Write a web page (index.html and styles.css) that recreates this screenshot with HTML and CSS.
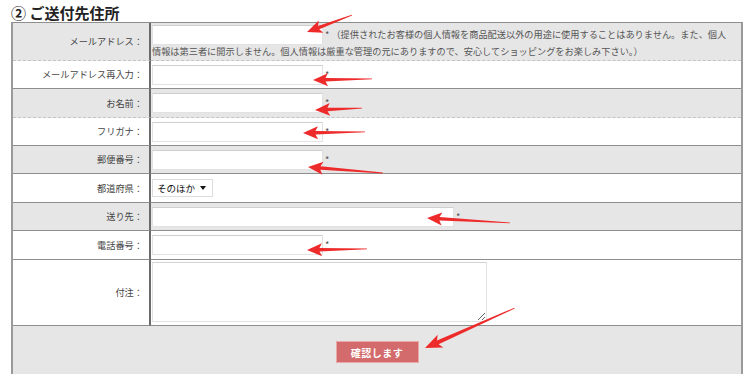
FILE: index.html
```html
<!DOCTYPE html>
<html lang="ja">
<head>
<meta charset="utf-8">
<title>ご送付先住所</title>
<link rel="stylesheet" href="styles.css">
</head>
<body>
<div class="page">
  <h2 class="title">② ご送付先住所</h2>
  <table class="form">
    <tr class="gray dashed r1">
      <th>メールアドレス：</th>
      <td class="top"><input class="field" type="text"> <span class="note">* （提供されたお客様の個人情報を商品配送以外の用途に使用することはありません。また、個人<br>情報は第三者に開示しません。個人情報は厳重な管理の元にありますので、安心してショッピングをお楽しみ下さい。）</span></td>
    </tr>
    <tr class="r2">
      <th>メールアドレス再入力：</th>
      <td><input class="field" type="text"> <span class="req">*</span></td>
    </tr>
    <tr class="gray dashed r3">
      <th>お名前：</th>
      <td><input class="field" type="text"> <span class="req">*</span></td>
    </tr>
    <tr class="r2">
      <th>フリガナ：</th>
      <td><input class="field" type="text"> <span class="req">*</span></td>
    </tr>
    <tr class="gray r2">
      <th>郵便番号：</th>
      <td><input class="field" type="text"> <span class="req">*</span></td>
    </tr>
    <tr class="r3">
      <th>都道府県：</th>
      <td><span class="select-wrap"><select class="select"><option>そのほか</option></select></span></td>
    </tr>
    <tr class="gray r2">
      <th>送り先：</th>
      <td><input class="field wide" type="text"> <span class="req">*</span></td>
    </tr>
    <tr class="r3">
      <th>電話番号：</th>
      <td><input class="field" type="text"> <span class="req">*</span></td>
    </tr>
    <tr class="r9">
      <th>付注：</th>
      <td class="top"><textarea class="memo"></textarea></td>
    </tr>
    <tr class="gray r10">
      <td class="submit-cell" colspan="2"><button class="submit" type="button">確認します</button></td>
    </tr>
  </table>
  <svg class="arrows" width="750" height="374" viewBox="0 0 750 374">
    <g fill="#ee2b2b">
      <polygon transform="translate(307 32) rotate(-20.7)" points="0,0 15,-6.5 12.5,-1.8 48,-0.4 48,0.4 12.5,1.8 15,6.5"/>
      <polygon transform="translate(313 80) rotate(-1)" points="0,0 15,-6.5 12.5,-1.8 59,-0.4 59,0.4 12.5,1.8 15,6.5"/>
      <polygon transform="translate(315 110) rotate(-2.4)" points="0,0 15,-6.5 12.5,-1.8 47,-0.4 47,0.4 12.5,1.8 15,6.5"/>
      <polygon transform="translate(303 133) rotate(-1)" points="0,0 15,-6.5 12.5,-1.8 62,-0.4 62,0.4 12.5,1.8 15,6.5"/>
      <polygon transform="translate(308 167) rotate(4.6)" points="0,0 15,-6.5 12.5,-1.8 75,-0.4 75,0.4 12.5,1.8 15,6.5"/>
      <polygon transform="translate(427 218) rotate(3.4)" points="0,0 15,-6.5 12.5,-1.8 83,-0.4 83,0.4 12.5,1.8 15,6.5"/>
      <polygon transform="translate(307 250) rotate(-1)" points="0,0 15,-6.5 12.5,-1.8 60,-0.4 60,0.4 12.5,1.8 15,6.5"/>
      <polygon transform="translate(425 348) rotate(-24)" points="0,0 17,-7 14,-2 98,-0.4 98,0.4 14,2 17,7"/>
    </g>
  </svg>
</div>
</body>
</html>
```
FILE: styles.css
```css
html, body {
  margin: 0;
  padding: 0;
  background: #ffffff;
}

body {
  font-family: "Noto Sans CJK JP", "Noto Sans", sans-serif;
  color: #444;
}

.page {
  position: relative;
  width: 750px;
  height: 374px;
  overflow: hidden;
}

.title {
  margin: 0;
  padding: 4px 0 0 11px;
  height: 18px;
  line-height: 18px;
  font-size: 15px;
  font-weight: 700;
  color: #222;
}

.form {
  margin-left: 11px;
  width: 732px;
  border-collapse: separate;
  border-spacing: 0;
  border-top: 1px solid #8e8e8e;
  border-left: 2px solid #9a9a9a;
  border-right: 2px solid #9a9a9a;
  font-size: 9.2px;
  line-height: 13px;
  table-layout: fixed;
}

.form th,
.form td {
  padding: 0;
  border-bottom: 1px solid #8e8e8e;
  vertical-align: middle;
}

.form th {
  width: 130px;
  padding-right: 6px;
  text-align: right;
  font-weight: 400;
  color: #444;
  border-right: 2px solid #6a6a6a;
  white-space: nowrap;
}

.form td {
  padding-left: 1px;
  text-align: left;
}

.form td.top {
  vertical-align: top;
  padding-top: 2px;
}

.gray th,
.gray td {
  background: #e6e6e6;
}

.dashed th,
.dashed td {
  border-bottom: 1px dashed #c4c4c4;
}

.r1 { height: 38px; }
.r2 { height: 28px; }
.r3 { height: 29px; }
.r9 { height: 66px; }
.r10 { height: 60px; }

.field {
  box-sizing: border-box;
  width: 171px;
  height: 20px;
  margin: 0;
  padding: 0 3px;
  background: #fff;
  border: 1px solid #e2e2e2;
  border-top-color: #cfcfcf;
  vertical-align: middle;
  font: inherit;
}

.field.wide {
  width: 302px;
}

.req,
.note {
  color: #555;
}

.note {
  white-space: nowrap;
}

.select-wrap {
  position: relative;
  display: inline-block;
  vertical-align: middle;
}

.select-wrap::after {
  content: "";
  position: absolute;
  right: 7px;
  top: 7px;
  border-left: 3.5px solid transparent;
  border-right: 3.5px solid transparent;
  border-top: 4px solid #111;
  pointer-events: none;
}

.select {
  appearance: none;
  -webkit-appearance: none;
  box-sizing: border-box;
  width: 61px;
  height: 18px;
  margin: 0;
  padding: 0 0 0 4px;
  background: #fff;
  border: 1px solid #dcdcdc;
  border-radius: 0;
  font-family: inherit;
  font-size: 9.5px;
  color: #111;
}

.memo {
  box-sizing: border-box;
  display: block;
  width: 335px;
  height: 60px;
  margin: 0;
  padding: 2px;
  background: #fff;
  border: 1px solid #e2e2e2;
  border-top-color: #d2d2d2;
  font: inherit;
}

.form td.submit-cell {
  padding: 15px 0 0;
  text-align: center;
  vertical-align: top;
  border-bottom: none;
}

.submit {
  box-sizing: border-box;
  width: 83px;
  height: 22px;
  margin: 0;
  padding: 0;
  background: #d36a6c;
  border: 1px solid #eaa9a9;
  color: #fff;
  font-family: "Noto Sans CJK JP", sans-serif;
  font-size: 10px;
  font-weight: 700;
  letter-spacing: 0.5px;
}

.arrows {
  position: absolute;
  left: 0;
  top: 0;
  pointer-events: none;
}
```
